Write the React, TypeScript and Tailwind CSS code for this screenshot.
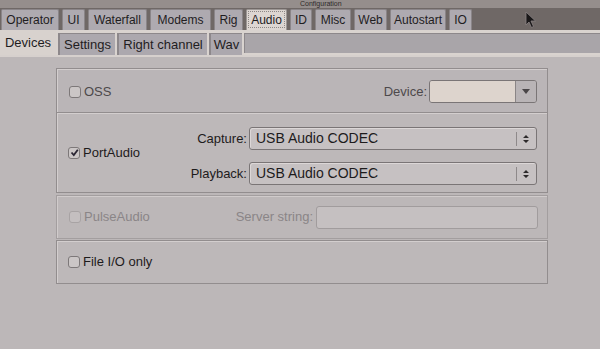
import React from "react";

const topTabs = [
  { label: "Operator", w: "w-[58px]" },
  { label: "UI", w: "w-[23px]" },
  { label: "Waterfall", w: "w-[59px]" },
  { label: "Modems", w: "w-[61px]" },
  { label: "Rig", w: "w-[29px]" },
  { label: "Audio", w: "w-[41px]", active: true },
  { label: "ID", w: "w-[22px]" },
  { label: "Misc", w: "w-[36px]" },
  { label: "Web", w: "w-[33px]" },
  { label: "Autostart", w: "w-[56px]" },
  { label: "IO", w: "w-[23px]" },
];

const subTabs = [
  { label: "Settings", w: "w-[57px]" },
  { label: "Right channel", w: "w-[90px]" },
  { label: "Wav", w: "w-[33px]" },
];

function Check({ checked, dim }: { checked?: boolean; dim?: boolean }) {
  return (
    <span
      className={`flex h-[12px] w-[12px] items-center justify-center rounded-[3px] border ${
        dim ? "border-[#a8a3a4] bg-[#c4bfc0]" : "border-[#7d7879] bg-[#cbc6c6]"
      }`}
    >
      {checked && (
        <svg width="9" height="9" viewBox="0 0 9 9">
          <path d="M1.5 4.5 L3.8 7 L7.8 1.8" fill="none" stroke="#2a2533" strokeWidth="1.8" />
        </svg>
      )}
    </span>
  );
}

function Choice({ value }: { value: string }) {
  return (
    <div className="flex h-[23px] w-[288px] items-center rounded-[3px] border border-[#7a7576] bg-[#c6c1c2] shadow-[inset_1px_1px_0_#dcd7d7]">
      <span className="flex-1 pl-[6px] text-[14px] text-[#1d1b1c]">{value}</span>
      <span className="h-[14px] w-px bg-[#8e898a]" />
      <svg width="18" height="14" viewBox="0 0 18 14" className="mr-[1px]">
        <path d="M6 6 L9 3 L12 6 Z M6 8 L9 11 L12 8 Z" fill="#2d2a2b" />
      </svg>
    </div>
  );
}

export default function App() {
  return (
    <div
      className="relative flex h-[349px] w-[600px] flex-col overflow-hidden bg-[#bcb7b8]"
      style={{ fontFamily: '"Liberation Sans", Arial, sans-serif' }}
    >
      {/* window title remnant */}
      <div className="h-[8px] overflow-hidden bg-[#958e8c]">
        <div className="pl-[300px] text-[7px] leading-[8px] text-[#2e2a2a]">Configuration</div>
      </div>

      {/* top tabs */}
      <div className="flex h-[22px] items-end gap-[3px] bg-[#6f6866] pl-[1px]">
        {topTabs.map((t) => (
          <div
            key={t.label}
            className={`flex h-[21px] items-center justify-center rounded-t-[2px] border border-b-0 text-[12px] text-[#1f1d1f] ${t.w} ${
              t.active
                ? "border-[#9d9896] bg-[#ddd6d2] outline-1 outline-dotted -outline-offset-3 outline-[#8d8886]"
                : "border-[#8a8588] bg-[#aeaab0]"
            }`}
          >
            {t.label}
          </div>
        ))}
      </div>

      {/* sub tabs */}
      <div className="flex h-[25px] bg-[#d9d3cf] pt-[3px]">
        <div className="-mt-[3px] flex h-[25px] w-[56px] items-center justify-center bg-[#d8d2ce] text-[13px] text-[#1f1d1f]">
          Devices
        </div>
        <div className="flex flex-1 gap-[2px] pl-[2px]">
          {subTabs.map((t) => (
            <div
              key={t.label}
              className={`flex h-[22px] items-center justify-center border-l-2 border-t border-[#8d888b] bg-[#aca8ae] text-[13px] text-[#1f1d1f] ${t.w}`}
            >
              {t.label}
            </div>
          ))}
          <div className="h-[20px] flex-1 border-t border-l border-[#8d888b] bg-[#a9a5a9]" />
        </div>
      </div>
      <div className="h-[2px] bg-[#d6d0cd]" />

      {/* content */}
      <div className="ml-[56px] mt-[11px] flex w-[492px] flex-col text-[13px] text-[#1d1b1c]">
        {/* OSS */}
        <div className="flex h-[45px] items-center border border-[#928d8e] bg-[#bab5b7] pl-[12px] pr-[10px] pt-[2px] shadow-[inset_1px_1px_0_#d3cece]">
          <Check />
          <span className="ml-[3px] text-[#4d494b]">OSS</span>
          <span className="ml-auto mr-[2px] text-[#4d494b]">Device:</span>
          <div className="flex h-[23px] w-[108px] overflow-hidden rounded-[3px] border border-[#7a7576]">
            <div className="flex-1 bg-[#ddd4cd]" />
            <div className="flex w-[21px] items-center justify-center border-l border-[#8a8586] bg-[#b9b4b6]">
              <svg width="10" height="7" viewBox="0 0 10 7">
                <path d="M1 1 L9 1 L5 6 Z" fill="#4a4648" />
              </svg>
            </div>
          </div>
        </div>

        {/* PortAudio */}
        <div className="flex h-[80px] items-center border border-t-0 border-[#928d8e] bg-[#bdb8b9] pl-[11px] pr-[10px] shadow-[inset_1px_1px_0_#d3cece]">
          <Check checked />
          <span className="ml-[3px]">PortAudio</span>
          <div className="ml-auto flex flex-col gap-[12px] pt-[7px]">
            <div className="flex items-center justify-end gap-[2px]">
              <span>Capture:</span>
              <Choice value="USB Audio CODEC" />
            </div>
            <div className="flex items-center justify-end gap-[2px]">
              <span>Playback:</span>
              <Choice value="USB Audio CODEC" />
            </div>
          </div>
        </div>

        {/* PulseAudio */}
        <div className="mt-[2px] flex h-[44px] items-center border border-[#a39e9f] bg-[#bcb7b8] pl-[12px] pr-[9px] shadow-[inset_1px_1px_0_#d0cbcb]">
          <Check dim />
          <span className="ml-[3px] text-[#8a8587]">PulseAudio</span>
          <span className="ml-auto mr-[3px] text-[#8a8587]">Server string:</span>
          <div className="h-[23px] w-[222px] rounded-[3px] border border-[#a19c9d] bg-[#c5c0c1]" />
        </div>

        {/* File I/O */}
        <div className="mt-[1px] flex h-[44px] items-center border border-[#928d8e] bg-[#bdb8b9] pl-[11px] shadow-[inset_1px_1px_0_#d3cece]">
          <Check />
          <span className="ml-[3px]">File I/O only</span>
        </div>
      </div>

      {/* mouse pointer */}
      <svg className="absolute left-[525px] top-[11px]" width="12" height="18" viewBox="0 0 12 18">
        <path d="M1 1 L1 14 L4 11 L6.5 16.5 L8.5 15.5 L6 10 L10.5 10 Z" fill="#1a1819" stroke="#8a8384" strokeWidth="0.8" />
      </svg>
    </div>
  );
}
